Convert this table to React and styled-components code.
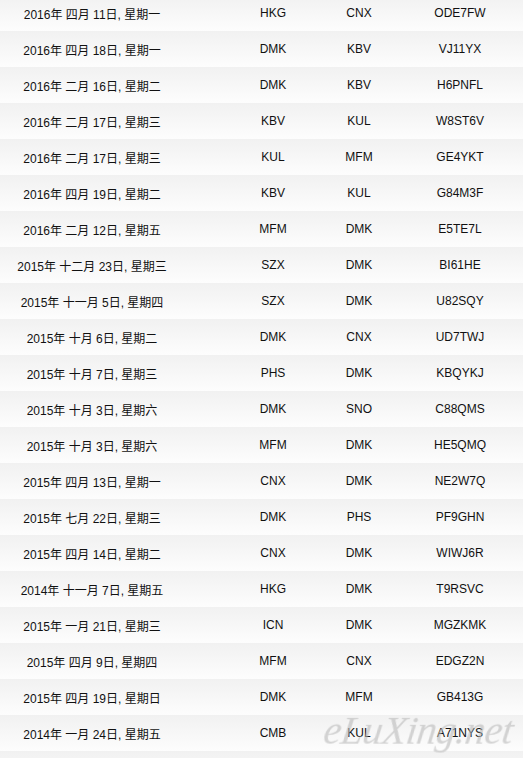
import React from 'react'
import styled, { createGlobalStyle } from 'styled-components'

const Global = createGlobalStyle`
  html, body {
    margin: 0;
    padding: 0;
    background: #fff;
    overflow: hidden;
  }
  body {
    font-family: "Liberation Sans", Arial, "Noto Sans CJK SC", sans-serif;
  }
`

const Page = styled.div`
  width: 523px;
  margin-top: -5px;
`

const Row = styled.div`
  display: grid;
  grid-template-columns: 230px 86px 86px 116px;
  height: 36px;
  align-items: center;
  background: linear-gradient(to bottom, #f1f1f1 0%, #fdfdfd 100%);
  color: #111;
  font-size: 12px;
`

const Cell = styled.div`
  text-align: center;
  white-space: nowrap;
  padding-right: ${p => (p.$date ? '46px' : '0')};
`

// faint script signature sitting over the bottom-right corner
const Watermark = styled.div`
  position: fixed;
  right: 10px;
  bottom: 7px;
  font-family: "Liberation Serif", "DejaVu Serif", serif;
  font-style: italic;
  font-size: 40px;
  line-height: 1;
  letter-spacing: -0.5px;
  color: rgba(185, 185, 185, 0.6);
  pointer-events: none;
  transform: skewX(-8deg);
`

const flights = [
  ['2016年 四月 11日, 星期一', 'HKG', 'CNX', 'ODE7FW'],
  ['2016年 四月 18日, 星期一', 'DMK', 'KBV', 'VJ11YX'],
  ['2016年 二月 16日, 星期二', 'DMK', 'KBV', 'H6PNFL'],
  ['2016年 二月 17日, 星期三', 'KBV', 'KUL', 'W8ST6V'],
  ['2016年 二月 17日, 星期三', 'KUL', 'MFM', 'GE4YKT'],
  ['2016年 四月 19日, 星期二', 'KBV', 'KUL', 'G84M3F'],
  ['2016年 二月 12日, 星期五', 'MFM', 'DMK', 'E5TE7L'],
  ['2015年 十二月 23日, 星期三', 'SZX', 'DMK', 'BI61HE'],
  ['2015年 十一月 5日, 星期四', 'SZX', 'DMK', 'U82SQY'],
  ['2015年 十月 6日, 星期二', 'DMK', 'CNX', 'UD7TWJ'],
  ['2015年 十月 7日, 星期三', 'PHS', 'DMK', 'KBQYKJ'],
  ['2015年 十月 3日, 星期六', 'DMK', 'SNO', 'C88QMS'],
  ['2015年 十月 3日, 星期六', 'MFM', 'DMK', 'HE5QMQ'],
  ['2015年 四月 13日, 星期一', 'CNX', 'DMK', 'NE2W7Q'],
  ['2015年 七月 22日, 星期三', 'DMK', 'PHS', 'PF9GHN'],
  ['2015年 四月 14日, 星期二', 'CNX', 'DMK', 'WIWJ6R'],
  ['2014年 十一月 7日, 星期五', 'HKG', 'DMK', 'T9RSVC'],
  ['2015年 一月 21日, 星期三', 'ICN', 'DMK', 'MGZKMK'],
  ['2015年 四月 9日, 星期四', 'MFM', 'CNX', 'EDGZ2N'],
  ['2015年 四月 19日, 星期日', 'DMK', 'MFM', 'GB413G'],
  ['2014年 一月 24日, 星期五', 'CMB', 'KUL', 'A71NYS'],
  ['', '', '', ''],
]

export default function App() {
  return (
    <>
      <Global />
      <Page>
        {flights.map((f, i) => (
          <Row key={i}>
            <Cell $date>{f[0]}</Cell>
            <Cell>{f[1]}</Cell>
            <Cell>{f[2]}</Cell>
            <Cell>{f[3]}</Cell>
          </Row>
        ))}
      </Page>
      <Watermark>eLuXing.net</Watermark>
    </>
  )
}
